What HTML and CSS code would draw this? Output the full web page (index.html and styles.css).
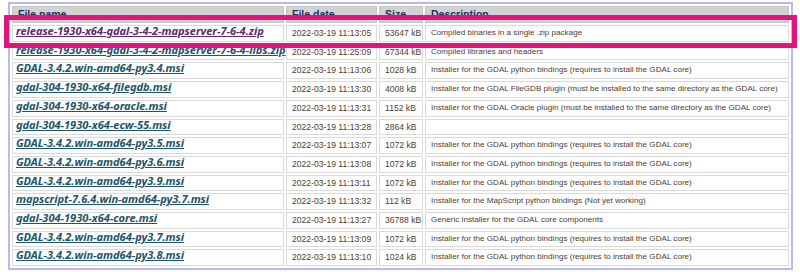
FILE: index.html
```html
<!DOCTYPE html>
<html>
<head>
<meta charset="utf-8">
<link rel="stylesheet" href="styles.css">
</head>
<body>
<div class="page">
  <table class="files">
    <colgroup>
      <col class="c-name"><col class="c-date"><col class="c-size"><col class="c-desc">
    </colgroup>
    <tr class="head">
      <th>File name</th><th>File date</th><th>Size</th><th>Description</th>
    </tr>
    <tr><td class="name"><a class="visited" href="#">release-1930-x64-gdal-3-4-2-mapserver-7-6-4.zip</a></td><td class="num">2022-03-19 11:13:05</td><td class="num">53647 kB</td><td>Compiled binaries in a single .zip package</td></tr>
    <tr><td class="name"><a href="#">release-1930-x64-gdal-3-4-2-mapserver-7-6-4-libs.zip</a></td><td class="num">2022-03-19 11:25:09</td><td class="num">67344 kB</td><td>Compiled libraries and headers</td></tr>
    <tr><td class="name"><a href="#">GDAL-3.4.2.win-amd64-py3.4.msi</a></td><td class="num">2022-03-19 11:13:06</td><td class="num">1028 kB</td><td>Installer for the GDAL python bindings (requires to install the GDAL core)</td></tr>
    <tr><td class="name"><a href="#">gdal-304-1930-x64-filegdb.msi</a></td><td class="num">2022-03-19 11:13:30</td><td class="num">4008 kB</td><td>Installer for the GDAL FileGDB plugin (must be installed to the same directory as the GDAL core)</td></tr>
    <tr><td class="name"><a href="#">gdal-304-1930-x64-oracle.msi</a></td><td class="num">2022-03-19 11:13:31</td><td class="num">1152 kB</td><td>Installer for the GDAL Oracle plugin (must be installed to the same directory as the GDAL core)</td></tr>
    <tr><td class="name"><a href="#">gdal-304-1930-x64-ecw-55.msi</a></td><td class="num">2022-03-19 11:13:28</td><td class="num">2864 kB</td><td></td></tr>
    <tr><td class="name"><a href="#">GDAL-3.4.2.win-amd64-py3.5.msi</a></td><td class="num">2022-03-19 11:13:07</td><td class="num">1072 kB</td><td>Installer for the GDAL python bindings (requires to install the GDAL core)</td></tr>
    <tr><td class="name"><a href="#">GDAL-3.4.2.win-amd64-py3.6.msi</a></td><td class="num">2022-03-19 11:13:08</td><td class="num">1072 kB</td><td>Installer for the GDAL python bindings (requires to install the GDAL core)</td></tr>
    <tr><td class="name"><a href="#">GDAL-3.4.2.win-amd64-py3.9.msi</a></td><td class="num">2022-03-19 11:13:11</td><td class="num">1072 kB</td><td>Installer for the GDAL python bindings (requires to install the GDAL core)</td></tr>
    <tr><td class="name"><a href="#">mapscript-7.6.4.win-amd64-py3.7.msi</a></td><td class="num">2022-03-19 11:13:32</td><td class="num">112 kB</td><td>Installer for the MapScript python bindings (Not yet working)</td></tr>
    <tr><td class="name"><a href="#">gdal-304-1930-x64-core.msi</a></td><td class="num">2022-03-19 11:13:27</td><td class="num">36788 kB</td><td>Generic installer for the GDAL core components</td></tr>
    <tr><td class="name"><a href="#">GDAL-3.4.2.win-amd64-py3.7.msi</a></td><td class="num">2022-03-19 11:13:09</td><td class="num">1072 kB</td><td>Installer for the GDAL python bindings (requires to install the GDAL core)</td></tr>
    <tr><td class="name"><a href="#">GDAL-3.4.2.win-amd64-py3.8.msi</a></td><td class="num">2022-03-19 11:13:10</td><td class="num">1024 kB</td><td>Installer for the GDAL python bindings (requires to install the GDAL core)</td></tr>
  </table>
  <div class="highlight"></div>
</div>
</body>
</html>
```
FILE: styles.css
```css
html, body {
  margin: 0;
  padding: 0;
  background: #ffffff;
}
.page {
  position: relative;
  padding: 2px 0 0 8px;
}
.files {
  border-collapse: separate;
  border-spacing: 2px;
  border: 2px solid #b9b9f2;
  background: #ffffff;
  font-family: "Liberation Sans", Arial, sans-serif;
  font-size: 8.1px;
  color: #4d3d33;
  table-layout: fixed;
  width: 785px;
}
.c-name { width: 272px; }
.c-date { width: 91px; }
.c-size { width: 44px; }
.c-desc { width: auto; }
.files th {
  background: #d2d2d2;
  border: 1px solid #c4c4c4;
  color: #1f2f5e;
  font-weight: bold;
  font-size: 10.5px;
  text-align: left;
  padding: 0 5px;
  height: 15px;
  line-height: 15px;
  white-space: nowrap;
}
.files td {
  border: 1px solid #dadada;
  padding: 0 5px;
  line-height: 14.7px;
  height: 14.7px;
  white-space: nowrap;
  background: #ffffff;
}
.files td.num {
  font-size: 8.6px;
}
.files td.name {
  padding-left: 3px;
}
.files a {
  font-family: "Noto Sans", "DejaVu Sans", sans-serif;
  font-style: italic;
  font-weight: bold;
  font-size: 11.1px;
  line-height: 10px;
  letter-spacing: -0.06px;
  color: #215466;
  text-decoration: underline;
}
.files a.visited {
  color: #5c2a6e;
}
.highlight {
  position: absolute;
  left: 4px;
  top: 15px;
  width: 793px;
  height: 33px;
  box-sizing: border-box;
  border: 5px solid #e2137a;
}
```
